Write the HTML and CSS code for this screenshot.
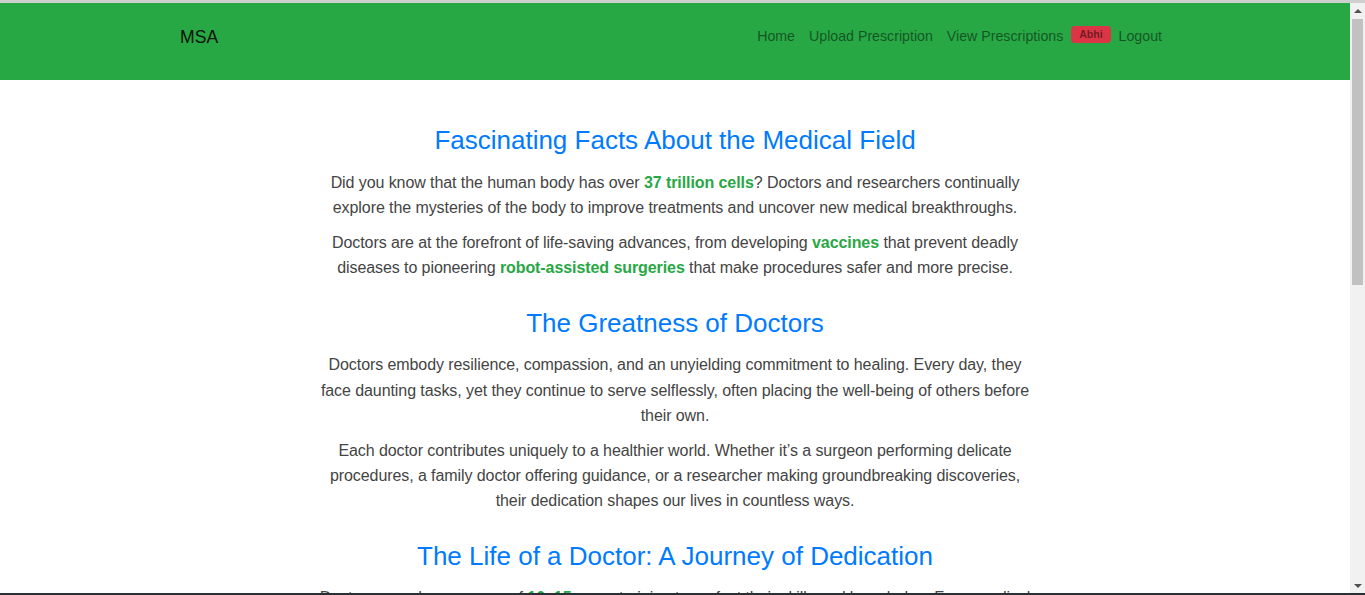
FILE: index.html
```html
<!DOCTYPE html>
<html lang="en">
<head>
<meta charset="utf-8">
<title>MSA</title>
<link rel="stylesheet" href="styles.css">
</head>
<body>
<div class="topline"></div>
<div class="window">
  <div class="viewport">
    <header class="navbar">
      <div class="nav-inner">
        <a class="brand" href="#">MSA</a>
        <nav class="nav-links">
          <a class="nav-link" href="#">Home</a>
          <a class="nav-link" href="#">Upload Prescription</a>
          <a class="nav-link" href="#">View Prescriptions</a>
          <span class="badge">Abhi</span>
          <a class="nav-link" href="#">Logout</a>
        </nav>
      </div>
    </header>
    <main class="content">
      <h2 class="title">Fascinating Facts About the Medical Field</h2>
      <p>Did you know that the human body has over <strong>37 trillion cells</strong>? Doctors and researchers continually explore the mysteries of the body to improve treatments and uncover new medical breakthroughs.</p>
      <p>Doctors are at the forefront of life-saving advances, from developing <strong>vaccines</strong> that prevent deadly diseases to pioneering <strong>robot-assisted surgeries</strong> that make procedures safer and more precise.</p>

      <h2 class="title">The Greatness of Doctors</h2>
      <p>Doctors embody resilience, compassion, and an unyielding commitment to healing. Every day, they face daunting tasks, yet they continue to serve selflessly, often placing the well-being of others before their own.</p>
      <p>Each doctor contributes uniquely to a healthier world. Whether it’s a surgeon performing delicate procedures, a family doctor offering guidance, or a researcher making groundbreaking discoveries, their dedication shapes our lives in countless ways.</p>

      <h2 class="title">The Life of a Doctor: A Journey of Dedication</h2>
      <p>Doctors spend an average of <strong>10–15</strong> years training to perfect their skills and knowledge. From medical school to residency, every step demands patience, sacrifice, and a deep love for helping people.</p>
      <p>Long shifts, difficult decisions, and emotional moments are part of their routine, yet doctors find strength in every patient they help recover and every family they bring hope to.</p>
    </main>
  </div>
  <div class="scrollbar" aria-hidden="true">
    <div class="sb-button"><span class="arrow-up"></span></div>
    <div class="sb-track"><div class="sb-thumb"></div></div>
    <div class="sb-button"><span class="arrow-down"></span></div>
  </div>
</div>
<div class="bottomline"></div>
</body>
</html>
```

FILE: styles.css
```css
html, body {
  height: 100%;
}

body {
  margin: 0;
  overflow: hidden;
  display: flex;
  flex-direction: column;
  font-family: "Liberation Sans", Arial, sans-serif;
  background: #ffffff;
}

.topline {
  flex: 0 0 3px;
  background: #cfcfcf;
}

.bottomline {
  flex: 0 0 2px;
  background: #2b3036;
}

.window {
  flex: 1 1 auto;
  min-height: 0;
  display: flex;
}

.viewport {
  flex: 1 1 auto;
  min-width: 0;
  overflow: hidden;
  background: #ffffff;
}

/* scrollbar widget */
.scrollbar {
  flex: 0 0 15px;
  display: flex;
  flex-direction: column;
  background: #f1f1f1;
}

.sb-button {
  flex: 0 0 15px;
  display: flex;
  align-items: center;
  justify-content: center;
}

.arrow-up {
  width: 0;
  height: 0;
  border-left: 4px solid transparent;
  border-right: 4px solid transparent;
  border-bottom: 4px solid #505050;
}

.arrow-down {
  width: 0;
  height: 0;
  border-left: 4px solid transparent;
  border-right: 4px solid transparent;
  border-top: 4px solid #505050;
}

.sb-track {
  flex: 1 1 auto;
  padding: 1px 2px 0;
}

.sb-thumb {
  height: 266px;
  background: #c1c1c1;
}

/* navbar */
.navbar {
  background: #28a745;
  height: 77px;
  box-sizing: border-box;
  padding-top: 15px;
}

.nav-inner {
  width: 990px;
  margin: 0 auto;
  display: flex;
  justify-content: space-between;
  align-items: center;
}

.brand {
  font-size: 17.6px;
  line-height: 26px;
  color: rgba(0, 0, 0, 0.9);
  text-decoration: none;
  padding: 6px 0;
}

.nav-links {
  display: flex;
  align-items: center;
}

.nav-link {
  font-size: 14.2px;
  line-height: 21.6px;
  padding: 8px 7px;
  color: rgba(0, 0, 0, 0.5);
  text-decoration: none;
}

.nav-links .nav-link:last-child {
  padding-right: 8px;
}

.badge {
  display: inline-block;
  background: #dc3545;
  color: rgba(0, 0, 0, 0.5);
  font-size: 10.5px;
  font-weight: 700;
  line-height: 11px;
  padding: 3px 8px;
  border-radius: 4px;
  margin: 0 1px 5px;
}

/* content */
.content {
  max-width: 720px;
  margin: 0 auto;
  padding: 18px 0 40px;
  text-align: center;
}

.title {
  font-size: 26px;
  font-weight: 400;
  line-height: 31.2px;
  color: #007bff;
  margin: 27px 0 13.6px;
}

.content p {
  font-size: 16px;
  line-height: 25.2px;
  letter-spacing: -0.08px;
  color: #444444;
  margin: 0 0 10px;
}

.content strong {
  color: #28a745;
  font-weight: 700;
}
```
